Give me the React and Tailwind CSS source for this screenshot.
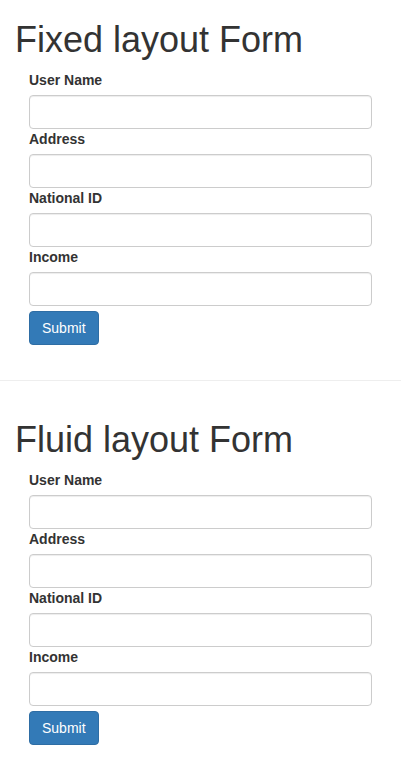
import React from "react";

const fields = ["User Name", "Address", "National ID", "Income"];

function FormSection({ title }) {
  return (
    <div className="pt-[20px]">
      <h1 className="mb-[10px] h-[40px] px-[15px] text-[36px] leading-[40px] font-medium text-[#333]">
        {title}
      </h1>
      <form className="px-[29px]" onSubmit={(e) => e.preventDefault()}>
        {fields.map((label) => (
          <div key={label}>
            <label className="block mb-[5px] text-[14px] leading-[20px] font-bold text-[#333]">
              {label}
            </label>
            <input
              type="text"
              className="block w-full h-[34px] px-3 text-[14px] text-[#555] bg-white border border-[#ccc] rounded-[4px] shadow-[inset_0_1px_1px_rgba(0,0,0,0.075)] outline-none"
            />
          </div>
        ))}
        <button
          type="submit"
          className="mt-[5px] h-[34px] px-[12px] text-[14px] leading-[20px] text-white bg-[#337ab7] border border-[#2e6da4] rounded-[4px]"
        >
          Submit
        </button>
      </form>
    </div>
  );
}

export default function App() {
  return (
    <div className="flex flex-col w-[401px] min-h-[759px] bg-white font-[Liberation_Sans,Arial,sans-serif]">
      <FormSection title="Fixed layout Form" />
      <hr className="mt-[35px] mb-[19px] border-0 border-t border-[#eee]" />
      <FormSection title="Fluid layout Form" />
    </div>
  );
}
